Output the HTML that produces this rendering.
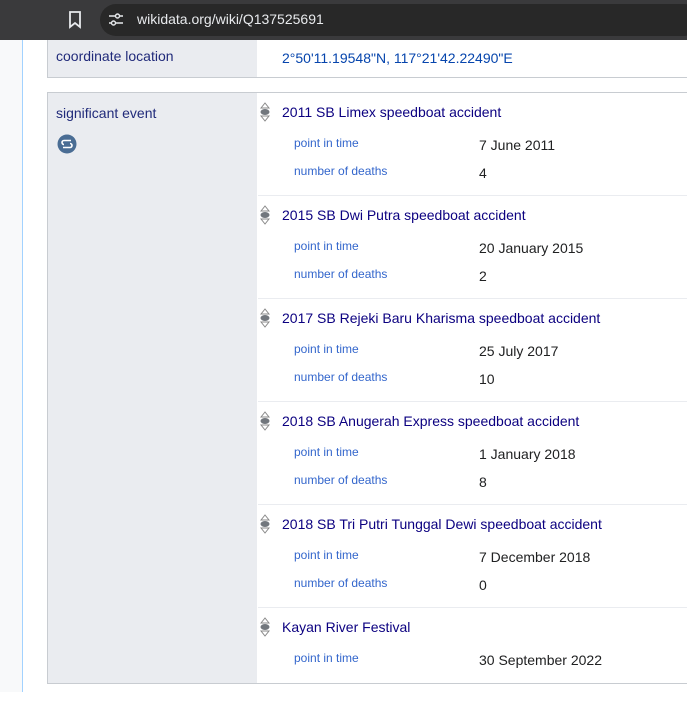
<!DOCTYPE html>
<html><head><meta charset="utf-8"><style>
*{margin:0;padding:0;box-sizing:border-box}
body{width:687px;height:692px;overflow:hidden;background:#fff;font-family:"Liberation Sans",sans-serif;position:relative}
.top{position:absolute;left:0;top:0;width:687px;height:40px;background:#3a3a3c}
.pill{position:absolute;left:100px;top:4px;width:600px;height:32px;background:#282828;border-radius:16px}
.url{position:absolute;left:137px;top:11px;color:#e8eaed;font-size:14px}
.side{position:absolute;left:0;top:40px;width:23px;height:652px;background:#f8f9fa;border-right:1px solid #a2d2ff}
.box{position:absolute;left:47px;border:1px solid #c8ccd1;border-right:none;width:700px;background:#fff}
.lab{position:absolute;left:0;top:0;bottom:0;width:209px;background:#eaecf0}
.lt{position:absolute;left:8px;font-size:14px;color:#202a7a}
.row{position:absolute;left:210px;width:500px;height:103px;border-bottom:1px solid #eaecf0}
.t{position:absolute;left:24px;top:11px;font-size:14px;color:#0b0080}
.q{position:absolute;left:36px;font-size:12px;color:#3366cc}
.v{position:absolute;left:221px;font-size:14px;color:#202122}
.rk{position:absolute;left:2px;top:9px}
</style></head><body>
<div class="top"><div class="pill"></div>
<svg style="position:absolute;left:68px;top:11px" width="14" height="18"><path d="M2 1h10v15l-5-4-5 4z" fill="none" stroke="#e8eaed" stroke-width="1.8"/></svg>
<svg style="position:absolute;left:108px;top:13px" width="16" height="14"><path d="M1 3h7M11 3h4M1 10h3M8 10h7" stroke="#e8eaed" stroke-width="1.5"/><circle cx="9.5" cy="3" r="2" fill="none" stroke="#e8eaed" stroke-width="1.4"/><circle cx="5.5" cy="10" r="2" fill="none" stroke="#e8eaed" stroke-width="1.4"/></svg>
<div class="url">wikidata.org/wiki/Q137525691</div></div>
<div class="side"></div>
<div class="box" style="top:40px;height:38px;border-top:none"><div class="lab"></div><div class="lt" style="top:8px">coordinate location</div>
<div style="position:absolute;left:234px;top:10px;font-size:14px;color:#0645ad">2°50'11.19548"N, 117°21'42.22490"E</div></div>
<div class="box" style="top:92px;height:592px"><div class="lab"></div><div class="lt" style="top:12px">significant event</div>
<svg style="position:absolute;left:9px;top:41px" width="20" height="20"><circle cx="10" cy="10" r="9.5" fill="#4a6d94"/><path d="M14 6.5H7a2 2 0 0 0 0 4M6 13.5h7a2 2 0 0 0 0-4" stroke="#fff" stroke-width="1.6" fill="none"/></svg>

<div class="row" style="top:0"><svg class="rk" width="10" height="20"><path d="M1 6L5 1L9 6z" fill="none" stroke="#888"/><ellipse cx="5" cy="10" rx="4.5" ry="3" fill="#72777d"/><path d="M1 14L5 19L9 14z" fill="none" stroke="#888"/></svg>
<div class="t">2011 SB Limex speedboat accident</div><div class="q" style="top:43px">point in time</div><div class="v" style="top:44px">7 June 2011</div><div class="q" style="top:71px">number of deaths</div><div class="v" style="top:72px">4</div></div>

<div class="row" style="top:103px"><svg class="rk" width="10" height="20"><path d="M1 6L5 1L9 6z" fill="none" stroke="#888"/><ellipse cx="5" cy="10" rx="4.5" ry="3" fill="#72777d"/><path d="M1 14L5 19L9 14z" fill="none" stroke="#888"/></svg>
<div class="t">2015 SB Dwi Putra speedboat accident</div><div class="q" style="top:43px">point in time</div><div class="v" style="top:44px">20 January 2015</div><div class="q" style="top:71px">number of deaths</div><div class="v" style="top:72px">2</div></div>

<div class="row" style="top:206px"><svg class="rk" width="10" height="20"><path d="M1 6L5 1L9 6z" fill="none" stroke="#888"/><ellipse cx="5" cy="10" rx="4.5" ry="3" fill="#72777d"/><path d="M1 14L5 19L9 14z" fill="none" stroke="#888"/></svg>
<div class="t">2017 SB Rejeki Baru Kharisma speedboat accident</div><div class="q" style="top:43px">point in time</div><div class="v" style="top:44px">25 July 2017</div><div class="q" style="top:71px">number of deaths</div><div class="v" style="top:72px">10</div></div>

<div class="row" style="top:309px"><svg class="rk" width="10" height="20"><path d="M1 6L5 1L9 6z" fill="none" stroke="#888"/><ellipse cx="5" cy="10" rx="4.5" ry="3" fill="#72777d"/><path d="M1 14L5 19L9 14z" fill="none" stroke="#888"/></svg>
<div class="t">2018 SB Anugerah Express speedboat accident</div><div class="q" style="top:43px">point in time</div><div class="v" style="top:44px">1 January 2018</div><div class="q" style="top:71px">number of deaths</div><div class="v" style="top:72px">8</div></div>

<div class="row" style="top:412px"><svg class="rk" width="10" height="20"><path d="M1 6L5 1L9 6z" fill="none" stroke="#888"/><ellipse cx="5" cy="10" rx="4.5" ry="3" fill="#72777d"/><path d="M1 14L5 19L9 14z" fill="none" stroke="#888"/></svg>
<div class="t">2018 SB Tri Putri Tunggal Dewi speedboat accident</div><div class="q" style="top:43px">point in time</div><div class="v" style="top:44px">7 December 2018</div><div class="q" style="top:71px">number of deaths</div><div class="v" style="top:72px">0</div></div>

<div class="row" style="top:515px;border-bottom:none"><svg class="rk" width="10" height="20"><path d="M1 6L5 1L9 6z" fill="none" stroke="#888"/><ellipse cx="5" cy="10" rx="4.5" ry="3" fill="#72777d"/><path d="M1 14L5 19L9 14z" fill="none" stroke="#888"/></svg>
<div class="t">Kayan River Festival</div><div class="q" style="top:43px">point in time</div><div class="v" style="top:44px">30 September 2022</div></div>
</div>
</body></html>
